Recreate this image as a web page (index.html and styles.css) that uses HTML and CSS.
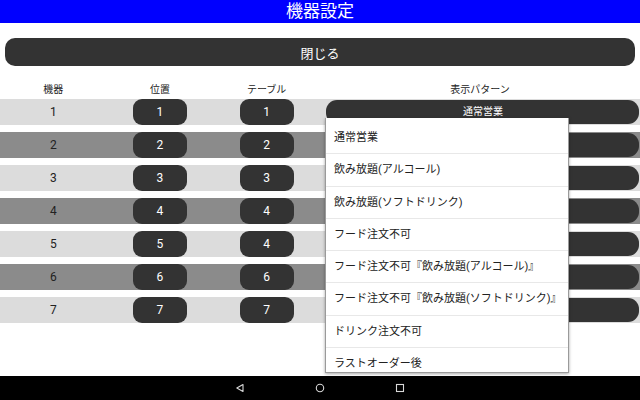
FILE: index.html
```html
<!DOCTYPE html>
<html lang="ja">
<head>
<meta charset="utf-8">
<title>機器設定</title>
<link rel="stylesheet" href="styles.css">
</head>
<body>
<div class="screen">
  <header class="titlebar">機器設定</header>
  <main class="content">
    <button class="close-btn">閉じる</button>
    <div class="table">
      <div class="row head">
        <div class="cell">機器</div>
        <div class="cell">位置</div>
        <div class="cell">テーブル</div>
        <div class="cell">表示パターン</div>
      </div>
      <div class="row light">
        <div class="cell">1</div>
        <div class="cell"><span class="pill">1</span></div>
        <div class="cell"><span class="pill">1</span></div>
        <div class="cell"><span class="pattern">通常営業</span></div>
      </div>
      <div class="row dark">
        <div class="cell">2</div>
        <div class="cell"><span class="pill">2</span></div>
        <div class="cell"><span class="pill">2</span></div>
        <div class="cell"><span class="pattern"></span></div>
      </div>
      <div class="row light">
        <div class="cell">3</div>
        <div class="cell"><span class="pill">3</span></div>
        <div class="cell"><span class="pill">3</span></div>
        <div class="cell"><span class="pattern"></span></div>
      </div>
      <div class="row dark">
        <div class="cell">4</div>
        <div class="cell"><span class="pill">4</span></div>
        <div class="cell"><span class="pill">4</span></div>
        <div class="cell"><span class="pattern"></span></div>
      </div>
      <div class="row light">
        <div class="cell">5</div>
        <div class="cell"><span class="pill">5</span></div>
        <div class="cell"><span class="pill">4</span></div>
        <div class="cell"><span class="pattern"></span></div>
      </div>
      <div class="row dark">
        <div class="cell">6</div>
        <div class="cell"><span class="pill">6</span></div>
        <div class="cell"><span class="pill">6</span></div>
        <div class="cell"><span class="pattern"></span></div>
      </div>
      <div class="row light">
        <div class="cell">7</div>
        <div class="cell"><span class="pill">7</span></div>
        <div class="cell"><span class="pill">7</span></div>
        <div class="cell"><span class="pattern"></span></div>
      </div>
    </div>
    <ul class="dropdown">
      <li>通常営業</li>
      <li>飲み放題(アルコール)</li>
      <li>飲み放題(ソフトドリンク)</li>
      <li>フード注文不可</li>
      <li>フード注文不可『飲み放題(アルコール)』</li>
      <li>フード注文不可『飲み放題(ソフトドリンク)』</li>
      <li>ドリンク注文不可</li>
      <li>ラストオーダー後</li>
    </ul>
  </main>
  <nav class="navbar">
    <svg class="nav-icon" viewBox="0 0 10 10" width="10" height="10"><path d="M8 1.5 L1.8 5 L8 8.5 Z" fill="none" stroke="#d8d8d8" stroke-width="1.1" stroke-linejoin="round"/></svg>
    <svg class="nav-icon" viewBox="0 0 10 10" width="10" height="10"><circle cx="5" cy="5" r="3.7" fill="none" stroke="#d8d8d8" stroke-width="1.1"/></svg>
    <svg class="nav-icon" viewBox="0 0 10 10" width="10" height="10"><rect x="1.5" y="1.5" width="7" height="7" fill="none" stroke="#d8d8d8" stroke-width="1.1"/></svg>
  </nav>
</div>
</body>
</html>
```
FILE: styles.css
```css
* { box-sizing: border-box; }
html, body {
  margin: 0;
  padding: 0;
  width: 640px;
  height: 400px;
  overflow: hidden;
  background: #fff;
  font-family: Roboto, "Noto Sans CJK JP", sans-serif;
}
.screen {
  display: flex;
  flex-direction: column;
  width: 640px;
  height: 400px;
}
.titlebar {
  height: 23px;
  background: #0000ff;
  color: #fff;
  font-size: 17px;
  line-height: 23px;
  text-align: center;
  flex: none;
}
.content {
  position: relative;
  flex: 1;
  overflow: hidden;
}
.close-btn {
  display: block;
  width: 630px;
  height: 28px;
  margin: 15px 5px 0 5px;
  border: none;
  border-radius: 10px;
  background: #333;
  color: #fff;
  font-family: Roboto, "Noto Sans CJK JP", sans-serif;
  font-size: 13px;
  padding: 0;
}
.table {
  margin-top: 12px;
}
.row {
  display: grid;
  grid-template-columns: 1fr 1fr 1fr 3fr;
  height: 26px;
  margin-bottom: 7px;
  align-items: center;
}
.row.head {
  height: 21px;
  margin-bottom: 0;
  font-size: 10px;
  color: #222;
}
.row.light { background: #dcdcdc; }
.row.dark { background: #8b8b8b; }
.cell {
  display: flex;
  justify-content: center;
  align-items: center;
  height: 100%;
  font-size: 12px;
  color: #222;
}
.row.head .cell { font-size: 10px; }
.pill {
  display: flex;
  align-items: center;
  justify-content: center;
  width: 54px;
  height: 26px;
  background: #333;
  color: #fff;
  border-radius: 9px;
  font-size: 12px;
}
.pattern {
  display: flex;
  align-items: center;
  justify-content: center;
  width: 313px;
  height: 24px;
  margin-left: 3px;
  margin-right: -3px;
  padding-bottom: 3px;
  background: #333;
  color: #fff;
  border-radius: 11px;
  font-size: 10px;
}
.dropdown {
  position: absolute;
  left: 325px;
  top: 95px;
  width: 244px;
  height: 255px;
  margin: 0;
  padding: 4px 0 0 0;
  list-style: none;
  background: #fff;
  border: 1px solid #9a9a9a;
  border-top: none;
  box-shadow: 0 1px 3px rgba(0,0,0,0.35);
  overflow: hidden;
}
.dropdown li {
  height: 32.3px;
  line-height: 31px;
  padding-left: 8px;
  font-size: 11px;
  color: #222;
  border-bottom: 1px solid #e8e8e8;
  white-space: nowrap;
}
.navbar {
  flex: none;
  height: 24px;
  background: #000;
  display: flex;
  justify-content: center;
  align-items: center;
  gap: 70px;
}
.nav-icon { display: block; }
```
